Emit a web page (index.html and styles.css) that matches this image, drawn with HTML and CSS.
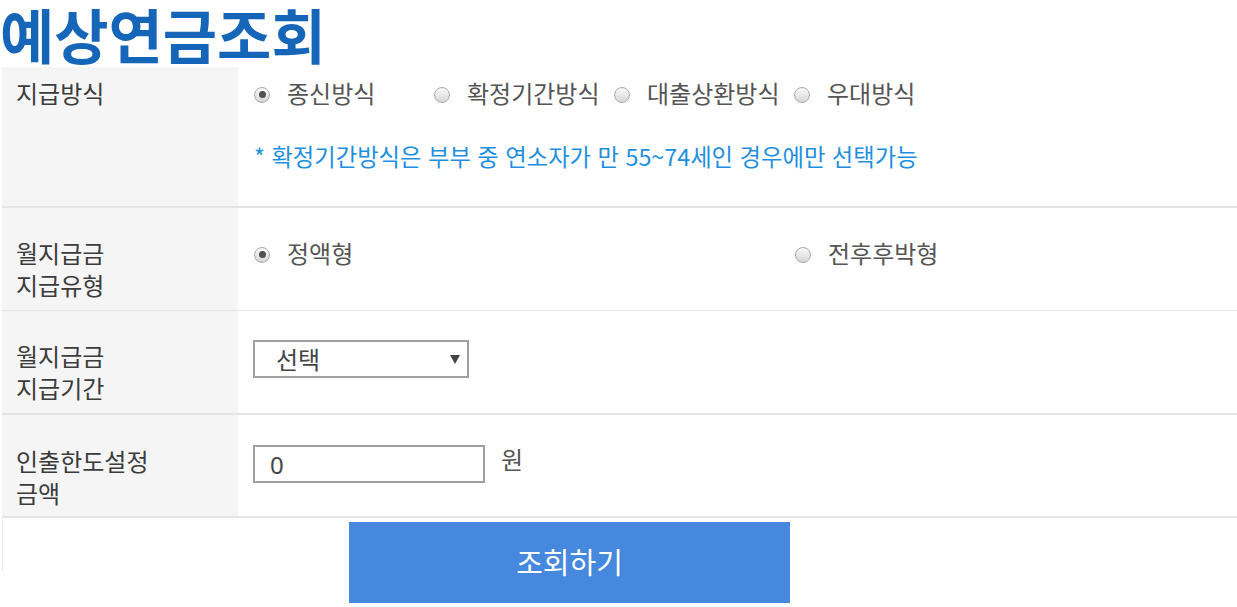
FILE: index.html
```html
<!DOCTYPE html>
<html lang="ko">
<head>
<meta charset="utf-8">
<title>예상연금조회</title>
<link rel="stylesheet" href="styles.css">
</head>
<body>
<h1 class="title">예상연금조회</h1>
<div class="form">
  <div class="row row1">
    <div class="label">지급방식</div>
    <div class="field">
      <div class="options">
        <span class="option"><span class="radio checked"></span>종신방식</span><span class="option"><span class="radio"></span>확정기간방식</span><span class="option"><span class="radio"></span>대출상환방식</span><span class="option"><span class="radio"></span>우대방식</span>
      </div>
      <p class="note">* 확정기간방식은 부부 중 연소자가 만 55~74세인 경우에만 선택가능</p>
    </div>
  </div>
  <div class="row row2">
    <div class="label">월지급금<br>지급유형</div>
    <div class="field">
      <div class="options">
        <span class="option wide"><span class="radio checked"></span>정액형</span><span class="option"><span class="radio"></span>전후후박형</span>
      </div>
    </div>
  </div>
  <div class="row row3">
    <div class="label">월지급금<br>지급기간</div>
    <div class="field">
      <div class="select"><span>선택</span><svg class="caret" width="10" height="10" viewBox="0 0 10 10"><path d="M0 1 L10 1 L5 10 Z" fill="#444"/></svg></div>
    </div>
  </div>
  <div class="row row4">
    <div class="label">인출한도설정<br>금액</div>
    <div class="field amount">
      <input class="input" type="text" value="0"><span class="unit">원</span>
    </div>
  </div>
  <div class="actions">
    <button class="submit" type="button">조회하기</button>
  </div>
</div>
</body>
</html>
```

FILE: styles.css
```css
* { box-sizing: border-box; }
html, body {
  margin: 0;
  padding: 0;
  background: #fff;
  font-family: "Noto Sans CJK KR", "Noto Sans", sans-serif;
}
.title {
  margin: 0;
  height: 67px;
  line-height: 67px;
  font-size: 59px;
  font-weight: 700;
  color: #1565b9;
  white-space: nowrap;
}
.form {
  margin-left: 2px;
  width: 1235px;
}
.row {
  display: grid;
  grid-template-columns: 236px 1fr;
  border-bottom: 2px solid #e4e4e4;
}
.row1 { height: 141px; }
.row2 { height: 103px; border-bottom-width: 1px; }
.row3 { height: 104px; }
.row4 { height: 103px; }
.label {
  background: #f5f5f5;
  color: #3c3c3c;
  font-size: 24px;
  line-height: 32px;
  padding: 29px 0 0 14px;
}
.row1 .label { padding-top: 10px; }
.row4 .label { padding-top: 30px; }
.field {
  padding: 29px 0 0 16px;
  font-size: 24px;
  line-height: 32px;
  color: #555;
}
.row1 .field { padding-top: 10px; }
.row4 .field { padding-top: 30px; }
.options { white-space: nowrap; }
.option {
  display: inline-block;
  width: 180px;
}
.option.wide { width: 541px; }
.radio {
  display: inline-block;
  width: 16px;
  height: 16px;
  border: 1px solid #a8a8a8;
  border-radius: 50%;
  background: linear-gradient(#fafafa, #d6d6d6);
  vertical-align: middle;
  margin: -3px 17px 0 0;
  position: relative;
}
.radio.checked::after {
  content: "";
  position: absolute;
  left: 3.5px;
  top: 3.5px;
  width: 7px;
  height: 7px;
  border-radius: 50%;
  background: #505050;
}
.note {
  margin: 31px 0 0;
  color: #1e8fe0;
  font-size: 23.3px;
  line-height: 32px;
  white-space: nowrap;
}
.select {
  width: 216px;
  height: 38px;
  margin-left: -1px;
  border: 2px solid #a0a0a0;
  display: flex;
  align-items: center;
  justify-content: space-between;
  padding: 0 7px 0 21px;
  color: #444;
  background: #fff;
}
.caret { display: block; }
.amount {
  display: flex;
  align-items: flex-start;
}
.input {
  width: 232px;
  height: 38px;
  margin: 0 0 0 -1px;
  border: 2px solid #a0a0a0;
  padding: 0 0 0 15px;
  font-family: "Noto Sans", "Noto Sans CJK KR", sans-serif;
  font-size: 24px;
  color: #444;
  background: #fff;
  outline: none;
}
.unit {
  margin-left: 16px;
  margin-top: -2px;
  color: #555;
}
.actions {
  height: 85px;
  padding: 4px 0 0 347px;
  background: linear-gradient(#ececec, #ececec) no-repeat 0 0 / 1px 52px;
}
.submit {
  display: block;
  width: 441px;
  height: 81px;
  border: 0;
  background: #4688dd;
  color: #fff;
  font-family: "Noto Sans CJK KR", sans-serif;
  font-size: 29px;
  padding: 0 0 4px;
  cursor: pointer;
}
```
